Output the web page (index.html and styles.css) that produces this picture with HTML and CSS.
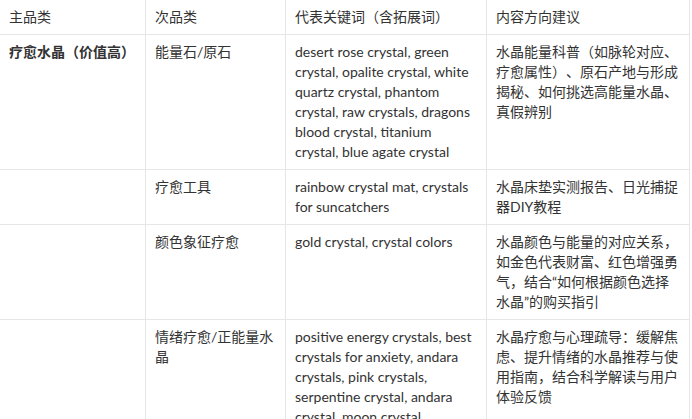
FILE: index.html
```html
<!DOCTYPE html>
<html lang="zh-CN">
<head>
<meta charset="utf-8">
<title>水晶关键词表</title>
<link rel="stylesheet" href="styles.css">
</head>
<body>
<table class="kw-table">
  <colgroup>
    <col class="c1">
    <col class="c2">
    <col class="c3">
    <col class="c4">
  </colgroup>
  <thead>
    <tr>
      <th>主品类</th>
      <th>次品类</th>
      <th>代表关键词（含拓展词）</th>
      <th>内容方向建议</th>
    </tr>
  </thead>
  <tbody>
    <tr>
      <td class="main">疗愈水晶（价值高）</td>
      <td>能量石/原石</td>
      <td>desert rose crystal, green crystal, opalite crystal, white quartz crystal, phantom crystal, raw crystals, dragons blood crystal, titanium crystal, blue agate crystal</td>
      <td>水晶能量科普（如脉轮对应、疗愈属性）、原石产地与形成揭秘、如何挑选高能量水晶、真假辨别</td>
    </tr>
    <tr>
      <td></td>
      <td>疗愈工具</td>
      <td>rainbow crystal mat, crystals for suncatchers</td>
      <td>水晶床垫实测报告、日光捕捉器DIY教程</td>
    </tr>
    <tr>
      <td></td>
      <td>颜色象征疗愈</td>
      <td>gold crystal, crystal colors</td>
      <td>水晶颜色与能量的对应关系，如金色代表财富、红色增强勇气，结合“如何根据颜色选择水晶”的购买指引</td>
    </tr>
    <tr>
      <td></td>
      <td>情绪疗愈/正能量水晶</td>
      <td>positive energy crystals, best crystals for anxiety, andara crystals, pink crystals, serpentine crystal, andara crystal, moon crystal</td>
      <td>水晶疗愈与心理疏导：缓解焦虑、提升情绪的水晶推荐与使用指南，结合科学解读与用户体验反馈</td>
    </tr>
  </tbody>
</table>
</body>
</html>
```

FILE: styles.css
```css
html, body {
  margin: 0;
  padding: 0;
  background: #ffffff;
}

body {
  font-family: "Lato", "Noto Sans CJK SC", sans-serif;
  font-size: 14px;
  line-height: 20px;
  color: #333333;
  text-spacing-trim: space-all;
}

.kw-table {
  margin: -1px 0 0 -1px;
  border-collapse: collapse;
  table-layout: fixed;
  width: 690px;
}

.c1 { width: 146px; }
.c2 { width: 140px; }
.c3 { width: 201px; }
.c4 { width: 203px; }

.kw-table th,
.kw-table td {
  border: 1px solid #e6e6e6;
  padding: 7px 9px;
  text-align: left;
  vertical-align: top;
  font-weight: normal;
  word-wrap: break-word;
}

.kw-table td.main {
  font-weight: bold;
}
```
